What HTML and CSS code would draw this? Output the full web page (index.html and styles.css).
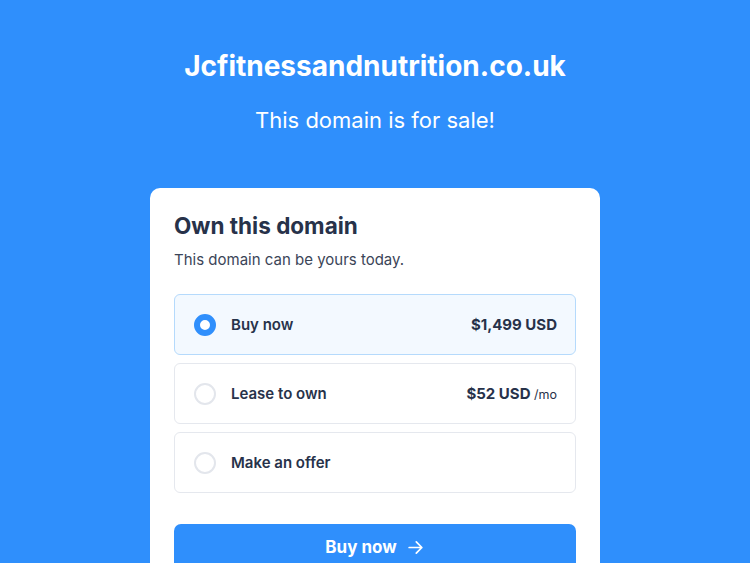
FILE: index.html
```html
<!DOCTYPE html>
<html>
<head>
<meta charset="utf-8">
<link rel="stylesheet" href="styles.css">
</head>
<body>
<header class="hero">
  <h1 class="domain">Jcfitnessandnutrition.co.uk</h1>
  <p class="tagline">This domain is for sale!</p>
</header>
<main class="card">
  <h2 class="card-title">Own this domain</h2>
  <p class="card-sub">This domain can be yours today.</p>
  <div class="options">
    <div class="option selected">
      <span class="radio checked"></span>
      <span class="label">Buy now</span>
      <span class="price">$1,499 USD</span>
    </div>
    <div class="option">
      <span class="radio"></span>
      <span class="label">Lease to own</span>
      <span class="price">$52 USD <small>/mo</small></span>
    </div>
    <div class="option">
      <span class="radio"></span>
      <span class="label">Make an offer</span>
    </div>
  </div>
  <button class="cta">Buy now
    <svg width="19" height="19" viewBox="0 0 24 24" fill="none" stroke="#fff" stroke-width="2.2" stroke-linecap="round" stroke-linejoin="round"><path d="M4 12h16M13 5l7 7-7 7"/></svg>
  </button>
</main>
</body>
</html>
```
FILE: styles.css
```css
html, body { margin: 0; padding: 0; }
body {
  background: #2f8ffc;
  font-family: Inter, "Noto Sans", sans-serif;
  color: #27324a;
  height: 563px;
  overflow: hidden;
}
.hero { text-align: center; color: #fff; padding-top: 48px; }
.domain { margin: 0; font-size: 28px; line-height: 36px; font-weight: 700; letter-spacing: 0; }
.tagline { margin: 21px 0 0; font-size: 22px; line-height: 30px; font-weight: 400; }
.card {
  width: 402px;
  margin: 53px auto 0;
  background: #fff;
  border-radius: 10px;
  padding: 24px 24px 40px;
}
.card-title { margin: 0; font-size: 22.5px; line-height: 28px; font-weight: 700; color: #27324a; }
.card-sub { margin: 9px 0 0; font-size: 15px; line-height: 22px; color: #3b4558; }
.options { margin-top: 23px; display: flex; flex-direction: column; gap: 8px; }
.option {
  height: 59px;
  border: 1px solid #e5e8ee;
  border-radius: 6px;
  display: flex;
  align-items: center;
  padding: 0 18px 0 19px;
  font-weight: 600;
  font-size: 15px;
}
.option.selected { background: #f3f9ff; border-color: #b5dafc; }
.radio {
  width: 18px; height: 18px;
  border: 2px solid #e3e6ec;
  border-radius: 50%;
  box-sizing: content-box;
  flex: none;
}
.radio.checked { border: 6px solid #2f8ffc; width: 10px; height: 10px; background: #fff; }
.label { margin-left: 15px; flex: 1; }
.price { font-size: 15px; font-weight: 700; }
.price small { font-size: 12.5px; font-weight: 400; }
.cta {
  margin-top: 31px;
  width: 100%;
  height: 46px;
  border: 0;
  border-radius: 7px;
  background: #2f8ffc;
  color: #fff;
  font-family: inherit;
  font-size: 17px;
  font-weight: 700;
  display: flex;
  align-items: center;
  justify-content: center;
  gap: 9px;
}
```
